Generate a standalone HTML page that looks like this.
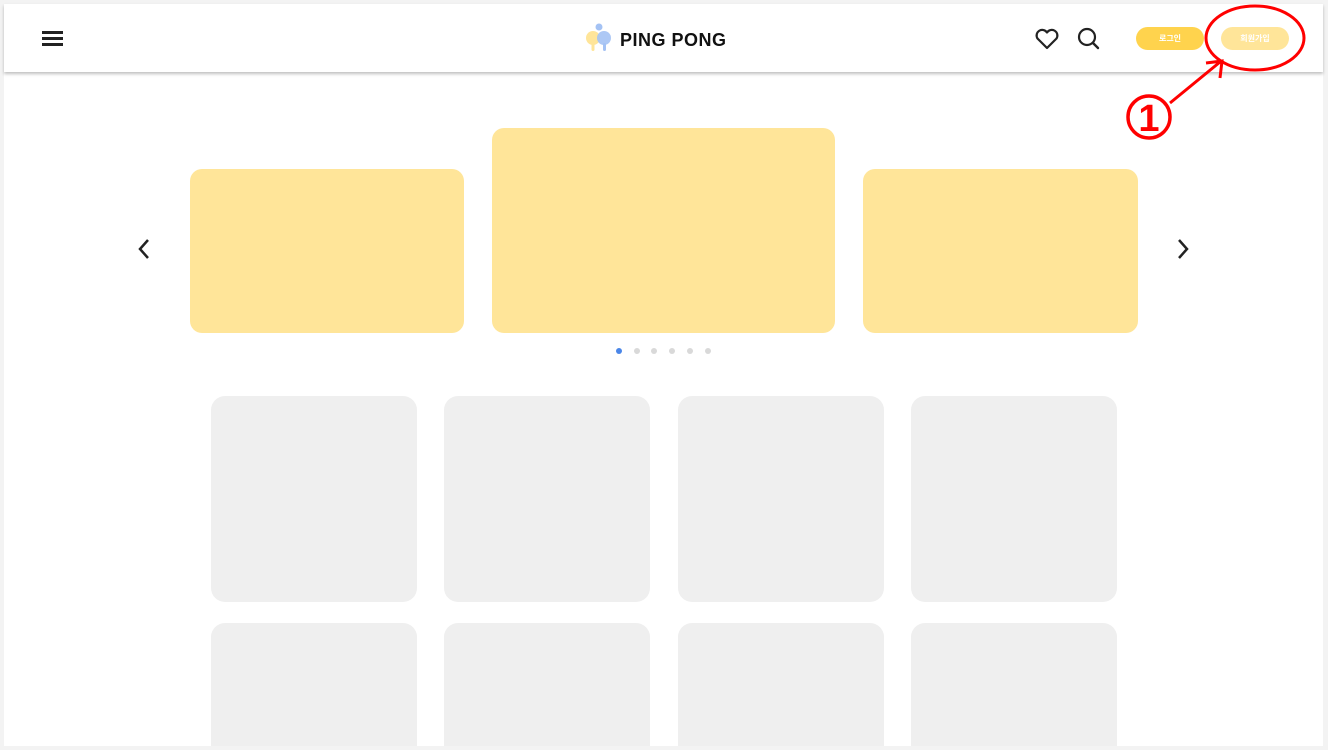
<!DOCTYPE html>
<html style="width:1328px;height:750px;overflow:hidden"><head><meta charset="utf-8"><style>
body{margin:0;width:1328px;height:750px;background:#f3f3f3;position:relative;overflow:hidden;font-family:"Liberation Sans","Noto Sans CJK KR",sans-serif}
.page{position:absolute;left:4px;top:4px;width:1319px;height:742px;background:#fff;overflow:hidden}
.hdr{position:absolute;left:4px;top:4px;width:1319px;height:68px;background:#fff;box-shadow:0 2px 3px rgba(0,0,0,.25);z-index:2}
.a{position:absolute;z-index:3}
.card{position:absolute;background:#ffe599;border-radius:12px}
.g{position:absolute;background:#efefef;border-radius:14px;width:206px;height:206px}
.dot{position:absolute;top:344px;width:6px;height:6px;border-radius:50%;background:#d9d9d9}
.btn{position:absolute;top:27px;height:23px;border-radius:12px;font-size:8px;color:#fff;font-weight:bold;text-align:center;line-height:23px;z-index:3}
</style></head><body>
<div class="page">
<div class="card" style="left:186px;top:165px;width:274px;height:164px"></div>
<div class="card" style="left:488px;top:124px;width:343px;height:205px"></div>
<div class="card" style="left:859px;top:165px;width:275px;height:164px"></div>
<div class="dot" style="left:612px;background:#4a86e8"></div><div class="dot" style="left:630px"></div><div class="dot" style="left:647px"></div><div class="dot" style="left:665px"></div><div class="dot" style="left:683px"></div><div class="dot" style="left:701px"></div>
<div class="g" style="left:207px;top:392px"></div><div class="g" style="left:440px;top:392px"></div><div class="g" style="left:674px;top:392px"></div><div class="g" style="left:907px;top:392px"></div>
<div class="g" style="left:207px;top:619px"></div><div class="g" style="left:440px;top:619px"></div><div class="g" style="left:674px;top:619px"></div><div class="g" style="left:907px;top:619px"></div>
</div>
<div class="hdr"></div>
<div class="a" style="left:42px;top:31px;width:21px;height:2.5px;background:#222;box-shadow:0 6px 0 #222,0 12px 0 #222"></div>
<svg class="a" style="left:584px;top:23px" width="30" height="30"><circle cx="15" cy="4" r="3.5" fill="#a4c2f4"/><circle cx="9" cy="15" r="7" fill="#ffe599"/><circle cx="20" cy="15" r="7" fill="#a4c2f4" opacity=".9"/><rect x="7.5" y="20" width="3" height="8" rx="1.5" fill="#ffe599"/><rect x="19" y="20" width="3" height="8" rx="1.5" fill="#a4c2f4"/></svg>
<div class="a" style="left:620px;top:30px;font-size:18px;font-weight:bold;letter-spacing:0.5px;color:#111">PING PONG</div>
<svg class="a" style="left:1034px;top:28px" width="26" height="22" viewBox="0 0 26 22"><path d="M13 20 L3.5 10.5 A5 5 0 0 1 13 4.5 A5 5 0 0 1 22.5 10.5 Z" fill="none" stroke="#222" stroke-width="2.2" stroke-linejoin="round"/></svg>
<svg class="a" style="left:1076px;top:27px" width="26" height="24"><circle cx="11" cy="10" r="8" fill="none" stroke="#222" stroke-width="2.2"/><path d="M17 16 L22 21" stroke="#222" stroke-width="2.4" stroke-linecap="round"/></svg>
<div class="btn" style="left:1136px;width:68px;background:#ffd34d">로그인</div>
<div class="btn" style="left:1221px;width:68px;background:#ffe599">회원가입</div>
<svg class="a" style="left:1110px;top:0" width="218" height="145"><ellipse cx="145" cy="38" rx="49" ry="32" fill="none" stroke="#f00" stroke-width="3"/><path d="M60 103 L110 62 M96 63 L112 61 L110 78" fill="none" stroke="#f00" stroke-width="3"/><circle cx="39" cy="117" r="21" fill="none" stroke="#f00" stroke-width="3.5"/><text x="39" y="131" font-size="38" font-weight="bold" fill="#f00" text-anchor="middle" font-family="Liberation Sans">1</text></svg>
<svg class="a" style="left:137px;top:238px" width="14" height="22"><path d="M11 2 L3 11 L11 20" fill="none" stroke="#222" stroke-width="2.5"/></svg>
<svg class="a" style="left:1176px;top:238px" width="14" height="22"><path d="M3 2 L11 11 L3 20" fill="none" stroke="#222" stroke-width="2.5"/></svg>
</body></html>
